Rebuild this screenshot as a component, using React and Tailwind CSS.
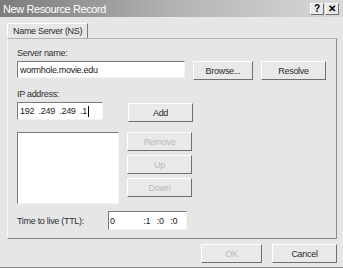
const raised = 'border border-t-white border-l-white border-r-[#6f6f6f] border-b-[#6f6f6f] bg-[#e9e9e9]'
const sunken = 'border border-t-[#7a7a7a] border-l-[#7a7a7a] border-r-[#f4f4f4] border-b-[#f4f4f4] bg-white'

const Button = ({ label, width, disabled = false, className = '' }) => (
  <div
    className={`${raised} h-[19px] flex items-center justify-center ${
      disabled ? 'text-[#b9b9b9]' : 'text-[#2a2a2a]'
    } ${className}`}
    style={{ width }}
  >
    {label}
  </div>
)

const TitleButton = ({ children }) => (
  <div className={`${raised} w-[14px] h-[12px] flex items-center justify-center text-[10px] font-bold text-black leading-none`}>
    {children}
  </div>
)

export default function App() {
  return (
    <div
      className="w-[343px] h-[268px] bg-[#e6e6e6] overflow-hidden flex flex-col border-b border-[#8a8a8a] text-[9px] tracking-[-0.3px] text-[#303030] leading-[12px]"
      style={{ fontFamily: '"Liberation Sans", Arial, sans-serif' }}
    >
      {/* title bar */}
      <div className="h-[17px] shrink-0 flex items-center justify-between pl-[3px] pr-[4px] bg-gradient-to-r from-[#7c7c7c] via-[#b2b2b2] to-[#d9d9d9]">
        <span className="text-[11px] tracking-[-0.4px] text-white">New Resource Record</span>
        <div className="flex gap-[1px]">
          <TitleButton>?</TitleButton>
          <TitleButton>✕</TitleButton>
        </div>
      </div>

      <div className="px-[7px] pt-[6px] flex flex-col">
        {/* tab */}
        <div className="w-[81px] h-[15px] flex items-center pl-[5px] border border-b-0 border-t-white border-l-white border-r-[#7a7a7a] text-[#2a2a2a] bg-[#e6e6e6]">
          Name Server (NS)
        </div>

        {/* panel */}
        <div className="w-[330px] h-[201px] border border-t-[#b3b3b3] border-l-[#f8f8f8] border-r-[#8c8c8c] border-b-[#8c8c8c] pl-[9px] flex flex-col">
          <div className="mt-[8px]">Server name:</div>
          <div className="mt-[2px] flex items-start">
            <div className={`${sunken} w-[168px] h-[17px] flex items-center pl-[2px] text-[#1a1a1a]`}>
              wormhole.movie.edu
            </div>
            <Button label="Browse..." width={60} className="ml-[8px]" />
            <Button label="Resolve" width={65} className="ml-[8px]" />
          </div>

          <div className="mt-[8px]">IP address:</div>
          <div className="mt-[2px] flex items-start">
            <div className={`${sunken} w-[86px] h-[18px] flex items-center pl-[2px] text-[#1a1a1a] whitespace-pre`}>
              192  .249  .249  .1<span className="inline-block w-[1px] h-[11px] bg-black ml-[1px]" />
            </div>
            <Button label="Add" width={65} className="ml-[25px] mt-[1px]" />
          </div>

          <div className="mt-[10px] flex items-start">
            <div className={`${sunken} w-[102px] h-[72px]`} />
            <div className="ml-[8px] flex flex-col gap-[4px]">
              <Button label="Remove" width={65} disabled />
              <Button label="Up" width={65} disabled />
              <Button label="Down" width={65} disabled />
            </div>
          </div>

          <div className="mt-[7px] flex items-center">
            <span className="w-[91px]">Time to live (TTL):</span>
            <div className={`${sunken} w-[79px] h-[19px] flex items-center pl-[1px] text-[#1a1a1a] whitespace-pre`}>
              0             :1   :0   :0
            </div>
          </div>
        </div>

        {/* footer */}
        <div className="mt-[5px] flex justify-end gap-[10px] pr-[-1px]">
          <Button label="OK" width={61} disabled />
          <Button label="Cancel" width={65} className="mr-[-1px]" />
        </div>
      </div>
    </div>
  )
}
